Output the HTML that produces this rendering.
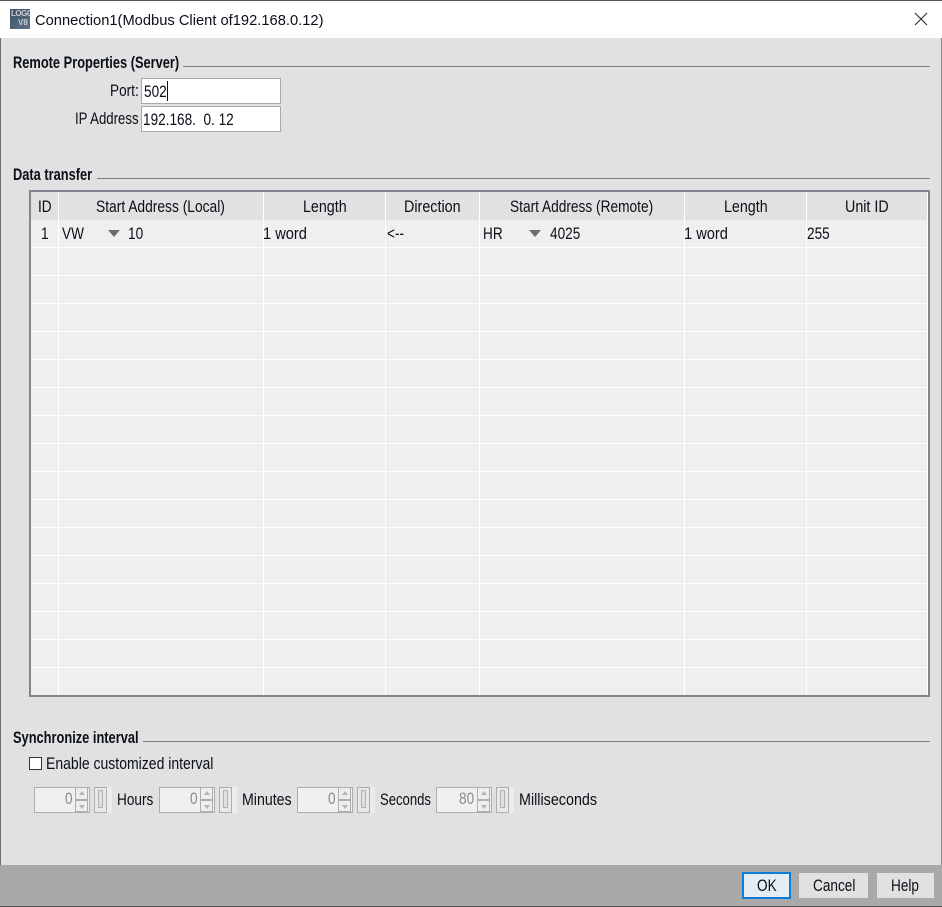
<!DOCTYPE html>
<html><head><meta charset="utf-8"><style>
html,body{margin:0;padding:0;background:#e1e1e1}
#r{position:relative;width:942px;height:907px;overflow:hidden;background:#e1e1e1;font-family:"Liberation Sans",sans-serif;color:#0a0f18}
#r div{position:absolute;box-sizing:border-box}
.t{font-size:17px;line-height:20px;margin-top:1px;white-space:pre;transform-origin:0 0;transform:scaleX(.8)}
.b{font-weight:bold;transform:scaleX(.755)}
.d{color:#8a8a8a;margin-top:0}
.hl{height:1px;background:#7d7d7d}
.rl{left:31px;width:897px;height:1px;background:#fff}
.vl{top:192px;width:1px;height:503px;background:#fff}
.in{background:#fff;border:1px solid #a9a9a9}
.sp{top:787px;width:56px;height:26px;background:#f0f0f0;border:1px solid #adadad}
.up{top:787px;width:13px;height:13px;border:1px solid #adadad;background:#eee}
.dn{top:800px;width:13px;height:12px;border:1px solid #adadad;background:#eee}
.ta{width:0;height:0;border-left:3px solid transparent;border-right:3px solid transparent;left:3px}
.sl{top:787px;width:18px;height:26px;background:#ececec}
.sb{left:0;top:0;width:13px;height:26px;border:1px solid #adadad;background:#e8e8e8}
.si{left:4px;top:3px;width:5px;height:18px;border:1px solid #b0b0b0;background:#e0e0e0}
.tri{width:0;height:0;border-left:6.5px solid transparent;border-right:6.5px solid transparent;border-top:7px solid #6d6d6d}
</style></head><body><div id="r">
<div style="left:0;top:0;width:942px;height:1px;background:#555"></div>
<div style="left:0;top:1px;width:942px;height:37px;background:#fff"></div>
<div style="left:0;top:38px;width:1px;height:869px;background:#6e6e6e"></div>
<div style="left:941px;top:38px;width:1px;height:869px;background:#8a8a8a"></div>

<div style="left:10px;top:9px;width:20px;height:20px;background:linear-gradient(135deg,#3b4f63,#5f7388)"></div>
<div style="left:11px;top:9px;width:19px;height:10px;font:bold 8px/10px 'Liberation Sans',sans-serif;color:#c8ced4;letter-spacing:-.5px;overflow:hidden">LOGO</div>
<div style="left:18px;top:18px;width:12px;height:10px;font:bold 8px/10px 'Liberation Sans',sans-serif;color:#c8ced4;overflow:hidden">V8</div>
<div class="t" style="left:35px;top:11px;margin-top:0;font-size:15px;transform:scaleX(.98)">Connection1(Modbus Client of192.168.0.12)</div>
<svg style="position:absolute;left:914px;top:12px" width="14" height="14"><path d="M1 1L13 13M13 1L1 13" stroke="#222" stroke-width="1" fill="none"/></svg>

<div class="t b" style="left:13px;top:52px">Remote Properties (Server)</div>
<div class="hl" style="left:183px;top:66px;width:747px"></div>
<div class="t" style="left:110px;top:80px">Port:</div>
<div class="in" style="left:141px;top:78px;width:140px;height:26px"></div>
<div class="t" style="left:144px;top:81px">502</div>
<div style="left:167px;top:81px;width:1px;height:20px;background:#111"></div>
<div class="t" style="left:75px;top:108px;transform:scaleX(.776)">IP Address</div>
<div class="in" style="left:141px;top:106px;width:140px;height:26px"></div>
<div class="t" style="left:143px;top:109px">192.168.  0. 12</div>

<div class="t b" style="left:13px;top:164px">Data transfer</div>
<div class="hl" style="left:97px;top:178px;width:833px"></div>

<div style="left:29px;top:190px;width:901px;height:507px;background:#efefef;border:2px solid #83868f"></div>
<div style="left:31px;top:192px;width:897px;height:28px;background:#e1e1e1"></div>
<div class="rl" style="top:247px"></div><div class="rl" style="top:275px"></div><div class="rl" style="top:303px"></div><div class="rl" style="top:331px"></div><div class="rl" style="top:359px"></div><div class="rl" style="top:387px"></div><div class="rl" style="top:415px"></div><div class="rl" style="top:443px"></div><div class="rl" style="top:471px"></div><div class="rl" style="top:499px"></div><div class="rl" style="top:527px"></div><div class="rl" style="top:555px"></div><div class="rl" style="top:583px"></div><div class="rl" style="top:611px"></div><div class="rl" style="top:639px"></div><div class="rl" style="top:667px"></div>
<div class="vl" style="left:58px"></div><div class="vl" style="left:263px"></div><div class="vl" style="left:385px"></div><div class="vl" style="left:479px"></div><div class="vl" style="left:684px"></div><div class="vl" style="left:806px"></div><div class="vl" style="left:927px"></div>

<div class="t" style="left:38px;top:196px">ID</div>
<div class="t" style="left:96px;top:196px;transform:scaleX(.812)">Start Address (Local)</div>
<div class="t" style="left:303px;top:196px;transform:scaleX(.839)">Length</div>
<div class="t" style="left:404px;top:196px;transform:scaleX(.844)">Direction</div>
<div class="t" style="left:510px;top:196px;transform:scaleX(.806)">Start Address (Remote)</div>
<div class="t" style="left:724px;top:196px;transform:scaleX(.839)">Length</div>
<div class="t" style="left:845px;top:196px;transform:scaleX(.84)">Unit ID</div>

<div class="t" style="left:41px;top:223px">1</div>
<div class="t" style="left:62px;top:223px">VW</div>
<div class="tri" style="left:108px;top:230px"></div>
<div class="t" style="left:128px;top:223px">10</div>
<div class="t" style="left:263px;top:223px;transform:scaleX(.86)">1 word</div>
<div class="t" style="left:387px;top:223px">&lt;--</div>
<div class="t" style="left:483px;top:223px">HR</div>
<div class="tri" style="left:529px;top:230px"></div>
<div class="t" style="left:550px;top:223px">4025</div>
<div class="t" style="left:684px;top:223px;transform:scaleX(.86)">1 word</div>
<div class="t" style="left:807px;top:223px">255</div>

<div class="t b" style="left:13px;top:727px">Synchronize interval</div>
<div class="hl" style="left:143px;top:741px;width:787px"></div>
<div style="left:29px;top:757px;width:13px;height:13px;background:#fff;border:1px solid #333"></div>
<div class="t" style="left:46px;top:753px;transform:scaleX(.824)">Enable customized interval</div>

<div class="sp" style="left:34px"></div><div class="t d" style="left:65px;top:789px">0</div>
<div class="up" style="left:75px"><div class="ta" style="top:3px;border-bottom:4px solid #b5b5b5"></div></div><div class="dn" style="left:75px"><div class="ta" style="top:4px;border-top:4px solid #b5b5b5"></div></div>
<div class="sl" style="left:94px"><div class="sb"></div><div class="si"></div></div>
<div class="t" style="left:117px;top:789px">Hours</div>

<div class="sp" style="left:159px"></div><div class="t d" style="left:190px;top:789px">0</div>
<div class="up" style="left:200px"><div class="ta" style="top:3px;border-bottom:4px solid #b5b5b5"></div></div><div class="dn" style="left:200px"><div class="ta" style="top:4px;border-top:4px solid #b5b5b5"></div></div>
<div class="sl" style="left:219px"><div class="sb"></div><div class="si"></div></div>
<div class="t" style="left:242px;top:789px;transform:scaleX(.833)">Minutes</div>

<div class="sp" style="left:297px"></div><div class="t d" style="left:328px;top:789px">0</div>
<div class="up" style="left:338px"><div class="ta" style="top:3px;border-bottom:4px solid #b5b5b5"></div></div><div class="dn" style="left:338px"><div class="ta" style="top:4px;border-top:4px solid #b5b5b5"></div></div>
<div class="sl" style="left:357px"><div class="sb"></div><div class="si"></div></div>
<div class="t" style="left:380px;top:789px;transform:scaleX(.77)">Seconds</div>

<div class="sp" style="left:436px"></div><div class="t d" style="left:459px;top:789px">80</div>
<div class="up" style="left:477px"><div class="ta" style="top:3px;border-bottom:4px solid #b5b5b5"></div></div><div class="dn" style="left:477px"><div class="ta" style="top:4px;border-top:4px solid #b5b5b5"></div></div>
<div class="sl" style="left:496px"><div class="sb"></div><div class="si"></div></div>
<div class="t" style="left:519px;top:789px;transform:scaleX(.843)">Milliseconds</div>

<div style="left:0;top:865px;width:942px;height:41px;background:#a9a9a9"></div>
<div style="left:0;top:906px;width:942px;height:1px;background:#555"></div>
<div style="left:742px;top:872px;width:49px;height:27px;background:#e4edf6;border:2px solid #0f7cd6"></div>
<div class="t" style="left:757px;top:875px">OK</div>
<div style="left:799px;top:873px;width:69px;height:25px;background:#e1e1e1"></div>
<div class="t" style="left:813px;top:875px">Cancel</div>
<div style="left:877px;top:873px;width:57px;height:25px;background:#e1e1e1"></div>
<div class="t" style="left:891px;top:875px">Help</div>
</div></body></html>
